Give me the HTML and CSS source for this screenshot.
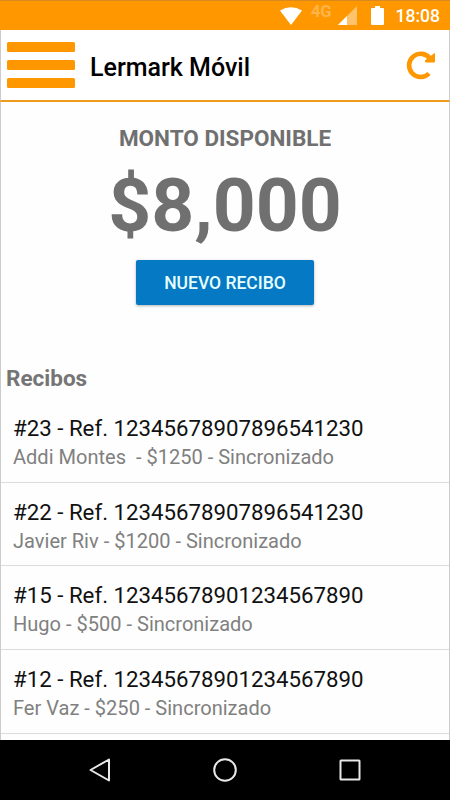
FILE: index.html
```html
<!DOCTYPE html>
<html lang="es">
<head>
    <meta charset="UTF-8">
    <meta name="viewport" content="width=device-width, initial-scale=1.0">
    <title>Lermark Móvil</title>
    <link rel="stylesheet" href="styles.css">
</head>
<body>
    <!-- Barra de estado -->
    <div class="status-bar">
        <svg class="wifi" width="22" height="18" viewBox="0 0 22 18"><path d="M0 3.500Q11-3 22 3.500L11 18Z" fill="#fff"/></svg>
        <span class="network">4G</span>
        <svg class="signal" width="19" height="19" viewBox="0 0 19 19">
            <path d="M19 0V19H0Z" fill="#ffc36b"/>
            <path d="M9 10V19H0Z" fill="#fff"/>
        </svg>
        <svg class="battery" width="13" height="19" viewBox="0 0 13 19"><path d="M4 0h5v2H12q1 0 1 1v15q0 1-1 1H1q-1 0-1-1V3q0-1 1-1h3Z" fill="#fff"/></svg>
        <span class="clock">18:08</span>
    </div>

    <!-- Encabezado -->
    <header class="header">
        <button class="menu-button" aria-label="Menú">
            <span></span>
            <span></span>
            <span></span>
        </button>
        <h1 class="title">Lermark Móvil</h1>
        <button class="refresh-button" aria-label="Actualizar">
            <svg width="30" height="30" viewBox="0 0 30 30">
                <path d="M23 23.500A11.600 11.600 0 1 1 24 8.500" fill="none" stroke="#ff9800" stroke-width="4.600"/>
                <path d="M28.500 3.500V12H19.500V10.500Z" fill="#ff9800" stroke="#ff9800" stroke-linejoin="round"/>
            </svg>
        </button>
    </header>

    <main class="content">
        <!-- Monto -->
        <section class="balance">
            <h2 class="balance-label">MONTO DISPONIBLE</h2>
            <div class="amount">$8,000</div>
            <button class="new-button">NUEVO RECIBO</button>
        </section>

        <!-- Lista de recibos -->
        <h3 class="list-title">Recibos</h3>
        <ul class="list">
            <li class="item">
                <div class="ref">#23 - Ref. 12345678907896541230</div>
                <div class="detail">Addi Montes&nbsp; - $1250 - Sincronizado</div>
            </li>
            <li class="item">
                <div class="ref">#22 - Ref. 12345678907896541230</div>
                <div class="detail">Javier Riv - $1200 - Sincronizado</div>
            </li>
            <li class="item">
                <div class="ref">#15 - Ref. 12345678901234567890</div>
                <div class="detail">Hugo - $500 - Sincronizado</div>
            </li>
            <li class="item">
                <div class="ref">#12 - Ref. 12345678901234567890</div>
                <div class="detail">Fer Vaz - $250 - Sincronizado</div>
            </li>
        </ul>
    </main>

    <!-- Barra de navegación -->
    <nav class="nav-bar">
        <svg width="24" height="24" viewBox="0 0 24 24"><path d="M21 1.500V22.500L2.500 12Z"/></svg>
        <svg width="24" height="24" viewBox="0 0 24 24"><circle cx="12" cy="12" r="10.800"/></svg>
        <svg width="24" height="24" viewBox="0 0 24 24"><rect x="2.500" y="2.500" width="19" height="19" rx="0.500"/></svg>
    </nav>
</body>
</html>
```
FILE: styles.css
```css
* {
    box-sizing: border-box;
}
body {
    margin: 0;
    height: 800px;
    display: flex;
    flex-direction: column;
    overflow: hidden;
    background-color: #fefefe;
    font-family: Roboto, "Noto Sans", sans-serif;
}
button {
    border: none;
    padding: 0;
    background: none;
    font-family: inherit;
    cursor: pointer;
}
h1, h2, h3, ul {
    margin: 0;
    padding: 0;
}
.status-bar {
    height: 30px;
    flex: none;
    display: flex;
    align-items: center;
    justify-content: flex-end;
    padding-right: 10px;
    background-color: #ff9800;
    border-top: 1px solid #d98a1c;
    color: white;
}
.network {
    margin: 0 6px 7px 9px;
    font-size: 16.5px;
    line-height: 16px;
    font-weight: 700;
    color: #ffb54a;
}
.battery {
    margin: 0 12px 0 14px;
}
.clock {
    font-size: 17.5px;
    font-weight: 500;
}
.header {
    height: 72px;
    flex: none;
    display: flex;
    align-items: center;
    padding: 0 13px 0 6px;
    background-color: #fff;
    border-bottom: 2px solid #ee9a1c;
    border-left: 1px solid #ccc;
    border-right: 1px solid #ccc;
}
.menu-button {
    width: 68px;
    display: flex;
    flex-direction: column;
    gap: 8px;
}
.menu-button span {
    height: 10px;
    width: 100%;
    border-radius: 1.5px;
    background-color: #ff9800;
}
.title {
    flex: 1;
    margin-left: 15px;
    padding-top: 4px;
    font-size: 25px;
    font-weight: 500;
    color: #000;
}
.refresh-button {
    height: 30px;
}
.content {
    flex: 1;
    min-height: 0;
    border-left: 1px solid #ccc;
    border-right: 1px solid #ccc;
}
.balance {
    display: flex;
    flex-direction: column;
    align-items: center;
    padding-top: 22px;
    color: #707070;
}
.balance-label {
    font-size: 22.5px;
    line-height: 28px;
    font-weight: 700;
}
.amount {
    margin-top: 11px;
    font-size: 75px;
    line-height: 84px;
    font-weight: 700;
}
.new-button {
    width: 178px;
    height: 45px;
    margin-top: 13px;
    border-radius: 2px;
    background-color: #0579c4;
    box-shadow: 0 1px 3px rgba(0, 0, 0, 0.3);
    color: #e8ffff;
    font-size: 17.5px;
    font-weight: 500;
}
.list-title {
    margin: 59px 0 0 5px;
    font-size: 22.5px;
    line-height: 28px;
    font-weight: 700;
    color: #757575;
}
.list {
    margin-top: 7px;
    list-style: none;
}
.item {
    height: 83.7px;
    padding: 15px 12px 0;
    border-bottom: 1px solid #dcdcdc;
}
.ref {
    font-size: 22.25px;
    line-height: 28px;
    color: #111;
}
.detail {
    font-size: 20.05px;
    line-height: 30px;
    color: #808080;
}
.nav-bar {
    height: 60px;
    flex: none;
    display: flex;
    align-items: center;
    justify-content: center;
    gap: 101px;
    background-color: #000;
}
.nav-bar svg {
    fill: none;
    stroke: #e8e8e8;
    stroke-width: 2;
    stroke-linejoin: round;
}
```
